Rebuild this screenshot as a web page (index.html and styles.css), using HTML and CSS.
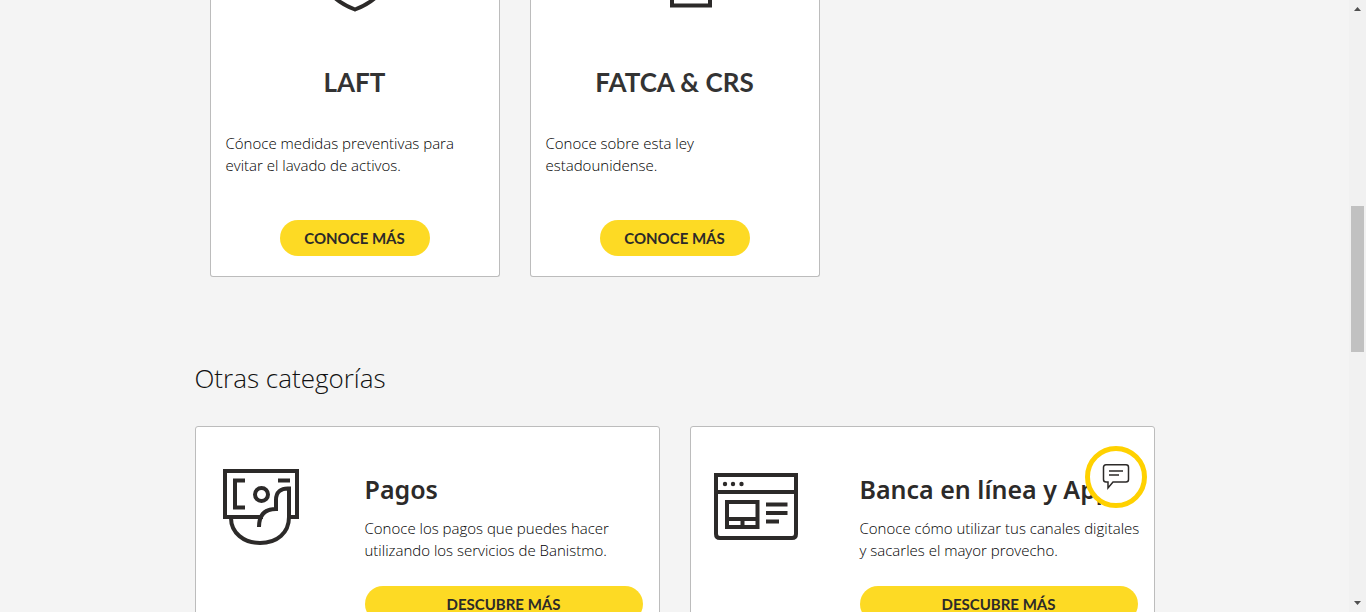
FILE: index.html
```html
<!DOCTYPE html>
<html lang="es">
<head>
<meta charset="utf-8">
<meta name="viewport" content="width=device-width, initial-scale=1">
<title>Banistmo</title>
<link rel="stylesheet" href="styles.css">
</head>
<body>
<main class="page">
  <div class="container">
    <section class="topics">
      <article class="topic">
        <svg class="topic-icon" viewBox="0 0 80 12" aria-hidden="true"><path d="M20-2Q28 5 40 9.500Q52 5 60-2" fill="none" stroke="#2c2a29" stroke-width="4"/></svg>
        <h3 class="topic-title">LAFT</h3>
        <p class="text">Cónoce medidas preventivas para evitar el lavado de activos.</p>
        <a class="button" href="#laft">CONOCE MÁS</a>
      </article>
      <article class="topic">
        <svg class="topic-icon" viewBox="0 0 80 12" aria-hidden="true"><path d="M37-5V5.500H75V-5" fill="none" stroke="#2c2a29" stroke-width="4"/></svg>
        <h3 class="topic-title">FATCA &amp; CRS</h3>
        <p class="text">Conoce sobre esta ley estadounidense.</p>
        <a class="button" href="#fatca">CONOCE MÁS</a>
      </article>
    </section>

    <h2 class="heading">Otras categorías</h2>

    <section class="categories">
      <article class="category">
        <svg class="category-icon" viewBox="0 0 100 100" fill="none" stroke="#2c2a29" stroke-width="4" aria-hidden="true">
          <path d="M52 60H14V14H86V60H78M34 23.500H24V50.500H34M67 23.500H79M20 61C20 76 33 86 49 86C66 86 78 76 78 60V31.500C70 31 65 35 65 43V52C54 52 48 58 48 70"/>
          <circle cx="50.500" cy="37.500" r="6.500"/>
        </svg>
        <div class="category-body">
          <h3 class="category-title">Pagos</h3>
          <p class="text">Conoce los pagos que puedes hacer utilizando los servicios de Banistmo.</p>
          <a class="button" href="#pagos">DESCUBRE MÁS</a>
        </div>
      </article>
      <article class="category">
        <svg class="category-icon" viewBox="0 0 100 100" fill="none" stroke="#2c2a29" stroke-width="4" aria-hidden="true">
          <path d="M10 18H90V77Q90 81 86 81H14Q10 81 10 77ZM10 35H90M21 45H51.500V70H21ZM21 62H51.500M36.500 62V70M60 47.500H81.500M60 56H81.500M60 64.500H73"/>
          <g fill="#2c2a29" stroke="none"><circle cx="19" cy="27" r="2.200"/><circle cx="27" cy="27" r="2.200"/><circle cx="35.500" cy="27" r="2.200"/></g>
        </svg>
        <div class="category-body">
          <h3 class="category-title">Banca en línea y App</h3>
          <p class="text">Conoce cómo utilizar tus canales digitales y sacarles el mayor provecho.</p>
          <a class="button" href="#banca">DESCUBRE MÁS</a>
        </div>
      </article>
    </section>
  </div>
</main>

<button class="chat" type="button" aria-label="Abrir chat">
  <svg viewBox="0 0 28 28" width="28" height="28" fill="none" stroke="#2c2a29" aria-hidden="true">
    <path stroke-width="1.500" d="M4 1.800H24Q26.500 1.800 26.500 4.300V16.500Q26.500 19 24 19H11L6 25V19H4Q1.500 19 1.500 16.500V4.300Q1.500 1.800 4 1.800Z"/>
    <path stroke-width="1.300" d="M7 8H21M7 12H17"/>
  </svg>
</button>

<div class="scrollbar" aria-hidden="true">
  <svg class="arrow" viewBox="0 0 7 4"><path d="M0 4L3.500 0L7 4Z" fill="#505050"/></svg>
  <div class="track"><div class="thumb"></div></div>
  <svg class="arrow" viewBox="0 0 7 4"><path d="M0 0L3.500 4L7 0Z" fill="#505050"/></svg>
</div>
</body>
</html>
```
FILE: styles.css
```css
* {
  box-sizing: border-box;
}

body {
  margin: 0;
  display: flex;
  height: 100vh;
  overflow: hidden;
  background: #f4f4f4;
  color: #2c2a29;
  font-family: "Open Sans", sans-serif;
}

.page {
  flex: 1;
  min-width: 0;
}

.container {
  max-width: 960px;
  margin: 0 auto;
}

h2, h3, p {
  margin: 0;
}

.topics {
  display: grid;
  grid-template-columns: repeat(3, 1fr);
  gap: 30px;
  padding: 0 15px;
}

.topic {
  display: flex;
  flex-direction: column;
  padding: 0 15px 20px;
  border: 1px solid #bcbcbc;
  border-top: 0;
  border-radius: 0 0 3px 3px;
  background: #fff;
}

.topic-icon {
  display: block;
  width: 80px;
  height: 12px;
  align-self: center;
}

.topic-title {
  margin: 54px 0 34px;
  color: #333;
  font-family: Lato, sans-serif;
  font-size: 26px;
  font-weight: 700;
  line-height: 32px;
  text-align: center;
}

.text {
  color: #000;
  font-size: 15px;
  font-weight: 300;
  line-height: 22px;
}

.button {
  display: block;
  border-radius: 18px;
  background: #fdda24;
  color: #2c2a29;
  font-family: Lato, sans-serif;
  font-size: 15px;
  font-weight: 700;
  line-height: 36px;
  text-align: center;
  text-decoration: none;
}

.topic .button {
  width: 150px;
  margin-top: 44px;
  align-self: center;
}

.heading {
  margin: 83px 0 30px;
  color: #111;
  font-size: 26px;
  font-weight: 300;
  line-height: 36px;
}

.categories {
  display: grid;
  grid-template-columns: repeat(2, 1fr);
  gap: 30px;
}

.category {
  display: flex;
  gap: 54px;
  padding: 30px 16px 30px 15px;
  border: 1px solid #bcbcbc;
  border-radius: 3px;
  background: #fff;
}

.category-icon {
  flex: none;
  width: 100px;
  height: 100px;
}

.category-body {
  flex: 1;
  min-width: 0;
  padding-top: 16px;
}

.category-title {
  margin-bottom: 12px;
  font-family: "Noto Sans", sans-serif;
  font-size: 25px;
  font-weight: 600;
  line-height: 32px;
}

.category .text {
  margin-right: -8px;
}

.category .button {
  margin-top: 25px;
}

.chat {
  position: fixed;
  right: 219px;
  bottom: 104px;
  display: grid;
  place-items: center;
  width: 62px;
  height: 62px;
  padding: 0;
  border: 5px solid #ffd100;
  border-radius: 50%;
  background: #fff;
}

.scrollbar {
  display: flex;
  flex-direction: column;
  align-items: center;
  width: 17px;
  padding: 7px 0;
  background: #f1f1f1;
}

.arrow {
  width: 7px;
  height: 4px;
}

.track {
  display: flex;
  flex: 1;
  flex-direction: column;
  padding-top: 195px;
}

.thumb {
  width: 13px;
  height: 146px;
  background: #c1c1c1;
}
```
